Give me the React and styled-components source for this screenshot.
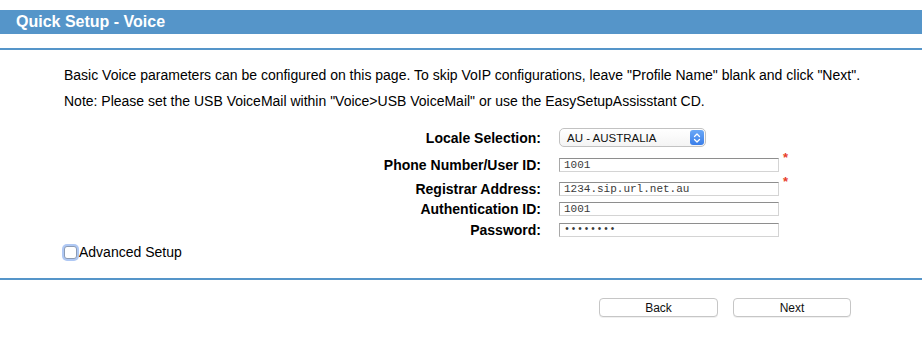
import React from 'react';
import styled, { createGlobalStyle } from 'styled-components';

const Global = createGlobalStyle`
  body {
    margin: 0;
    background: #ffffff;
    font-family: "Liberation Sans", Arial, Helvetica, sans-serif;
    color: #000;
  }
`;

const BLUE = '#5595c9';

const fields = [
  { label: 'Phone Number/User ID:', value: '1001', required: true, gap: 10 },
  { label: 'Registrar Address:', value: '1234.sip.url.net.au', required: true, gap: 10 },
  { label: 'Authentication ID:', value: '1001', gap: 6 },
  { label: 'Password:', value: '\u2022\u2022\u2022\u2022\u2022\u2022\u2022\u2022', gap: 7, dots: true },
];

const App = () => {
  return (
    <Page>
      <Global />
      <TitleBar>Quick Setup - Voice</TitleBar>
      <Rule $top={14} />
      <Intro>
        <p>Basic Voice parameters can be configured on this page. To skip VoIP configurations, leave "Profile Name" blank and click "Next".</p>
        <p>Note: Please set the USB VoiceMail within "Voice&gt;USB VoiceMail" or use the EasySetupAssisstant CD.</p>
      </Intro>
      <Form>
        <Row $gap={14} $h={19}>
          <Label>Locale Selection:</Label>
          <Select>
            <span>AU - AUSTRALIA</span>
            <Stepper>
              <svg width="8" height="12" viewBox="0 0 8 12">
                <path d="M1.5 4.5 L4 2 L6.5 4.5 M1.5 7.5 L4 10 L6.5 7.5" fill="none" stroke="#fff" strokeWidth="1.3" strokeLinecap="round" strokeLinejoin="round" />
              </svg>
            </Stepper>
          </Select>
        </Row>
        {fields.map((f) => (
          <Row key={f.label} $gap={f.gap} $h={14}>
            <Label>{f.label}</Label>
            <Input $dots={f.dots}>{f.value}</Input>
            {f.required && <Star>*</Star>}
          </Row>
        ))}
      </Form>
      <CheckRow>
        <Check />
        <span>Advanced Setup</span>
      </CheckRow>
      <Rule $top={19} />
      <Buttons>
        <Button $w={119}>Back</Button>
        <Button $w={118}>Next</Button>
      </Buttons>
    </Page>
  );
};

const Page = styled.div`
  width: 922px;
  height: 340px;
  padding-top: 10px;
  box-sizing: border-box;
`;

const TitleBar = styled.div`
  height: 24px;
  line-height: 24px;
  background: ${BLUE};
  color: #fff;
  font-weight: bold;
  font-size: 16px;
  padding-left: 16px;
`;

const Rule = styled.div`
  height: 2px;
  background: ${BLUE};
  margin-top: ${(p) => p.$top}px;
`;

const Intro = styled.div`
  padding-left: 64px;
  margin-top: 12px;
  font-size: 14px;
  line-height: 26px;

  p {
    margin: 0;
  }
`;

const Form = styled.div`
  display: flex;
  flex-direction: column;
`;

const Row = styled.div`
  display: grid;
  grid-template-columns: 541px 220px auto;
  column-gap: 18px;
  align-items: center;
  height: ${(p) => p.$h}px;
  margin-top: ${(p) => p.$gap}px;
`;

const Label = styled.div`
  text-align: right;
  font-weight: bold;
  font-size: 14px;
  line-height: 14px;
  padding-top: 1px;
`;

const Select = styled.div`
  width: 147px;
  height: 19px;
  box-sizing: border-box;
  border: 1px solid #c2c2c2;
  border-radius: 5px;
  background: linear-gradient(#ffffff, #f4f4f4);
  display: flex;
  align-items: center;
  justify-content: space-between;
  padding-left: 7px;
  padding-right: 1px;
  font-size: 11.5px;
  color: #111;
`;

const Stepper = styled.span`
  width: 14px;
  height: 15px;
  border-radius: 3px;
  background: linear-gradient(#6aa8f7, #3a7ee9);
  display: flex;
  align-items: center;
  justify-content: center;
`;

const Input = styled.div`
  width: 220px;
  height: 14px;
  box-sizing: border-box;
  border: 1px solid #d4d4d4;
  border-top-color: #8e8e8e;
  border-left-color: #a8a8a8;
  padding-left: 4px;
  font-family: "Liberation Mono", "Courier New", monospace;
  font-size: ${(p) => (p.$dots ? '10px' : '11px')};
  letter-spacing: ${(p) => (p.$dots ? '0.5px' : '0')};
  line-height: 12px;
  color: #3a3a3a;
`;

const Star = styled.span`
  color: #e8402a;
  font-size: 13px;
  font-weight: bold;
  line-height: 10px;
  align-self: start;
  margin-top: -4px;
  margin-left: -14px;
`;

const CheckRow = styled.div`
  display: flex;
  align-items: center;
  padding-left: 64px;
  margin-top: 9px;
  height: 14px;
  font-size: 14px;
`;

const Check = styled.span`
  width: 11px;
  height: 11px;
  margin-right: 2px;
  border: 1px solid #8b9bb4;
  border-radius: 3px;
  background: #fff;
  box-shadow: 0 0 0 2px rgba(110, 155, 235, 0.55);
`;

const Buttons = styled.div`
  display: flex;
  justify-content: flex-end;
  gap: 15px;
  padding-right: 71px;
  margin-top: 18px;
`;

const Button = styled.button`
  width: ${(p) => p.$w}px;
  height: 19px;
  padding: 0;
  border: 1px solid #c6c6c6;
  border-radius: 4px;
  background: #fff;
  font-family: "Liberation Sans", Arial, Helvetica, sans-serif;
  font-size: 12px;
  color: #111;
  box-shadow: 0 1px 0 rgba(0, 0, 0, 0.06);
`;

export default App;
